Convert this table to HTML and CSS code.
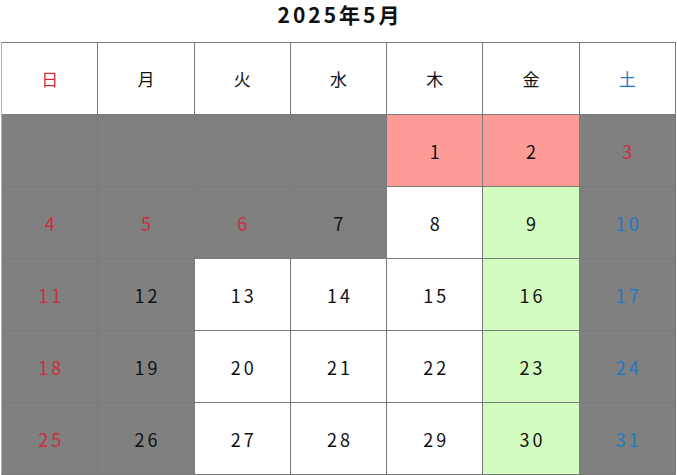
FILE: index.html
```html
<!DOCTYPE html>
<html lang="ja">
<head>
<meta charset="utf-8">
<link rel="stylesheet" href="styles.css">
</head>
<body>
<h1 class="title">2025年5月</h1>
<div class="cal">
  <div class="cell head sun">日</div>
  <div class="cell head">月</div>
  <div class="cell head">火</div>
  <div class="cell head">水</div>
  <div class="cell head">木</div>
  <div class="cell head">金</div>
  <div class="cell head sat">土</div>

  <div class="cell off"></div>
  <div class="cell off"></div>
  <div class="cell off"></div>
  <div class="cell off"></div>
  <div class="cell pink">1</div>
  <div class="cell pink">2</div>
  <div class="cell off red">3</div>

  <div class="cell off red">4</div>
  <div class="cell off red">5</div>
  <div class="cell off red">6</div>
  <div class="cell off">7</div>
  <div class="cell">8</div>
  <div class="cell green">9</div>
  <div class="cell off blue">10</div>

  <div class="cell off red">11</div>
  <div class="cell off">12</div>
  <div class="cell">13</div>
  <div class="cell">14</div>
  <div class="cell">15</div>
  <div class="cell green">16</div>
  <div class="cell off blue">17</div>

  <div class="cell off red">18</div>
  <div class="cell off">19</div>
  <div class="cell">20</div>
  <div class="cell">21</div>
  <div class="cell">22</div>
  <div class="cell green">23</div>
  <div class="cell off blue">24</div>

  <div class="cell off red">25</div>
  <div class="cell off">26</div>
  <div class="cell">27</div>
  <div class="cell">28</div>
  <div class="cell">29</div>
  <div class="cell green">30</div>
  <div class="cell off blue">31</div>
</div>
</body>
</html>
```
FILE: styles.css
```css
html, body {
  margin: 0;
  padding: 0;
  background: #fff;
}
body {
  font-family: "Noto Sans CJK JP", "Noto Sans", sans-serif;
  color: #111;
}
.title {
  margin: 0;
  height: 42px;
  box-sizing: border-box;
  padding: 0 0 0 3px;
  text-align: center;
  font-size: 21px;
  line-height: 28px;
  font-weight: bold;
  letter-spacing: 3px;
}
.cal {
  margin-left: 1px;
  width: 675px;
  box-sizing: border-box;
  display: grid;
  grid-template-columns: repeat(7, 1fr);
  grid-template-rows: repeat(6, 71px);
  gap: 1px;
  border: 1px solid #7a7a7a;
  border-left-color: #b5b5b5;
  background: #7a7a7a;
}
.cell {
  background: #fff;
  display: flex;
  align-items: center;
  justify-content: center;
  font-size: 18px;
  letter-spacing: 3px;
  padding-left: 3px;
  color: #111;
}
.head {
  font-size: 17px;
  letter-spacing: 0;
  padding-left: 0;
}
.off { background: #808080; }
.pink { background: #ff9b97; }
.green { background: #d2fcc0; }
.red, .sun { color: #cc2f3c; }
.blue, .sat { color: #1f7ac4; }
```
